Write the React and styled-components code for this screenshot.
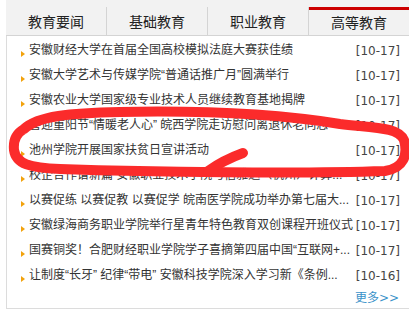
import React from "react";
import styled, { createGlobalStyle } from "styled-components";

const Global = createGlobalStyle`
  html, body { margin: 0; padding: 0; background: #fff; }
  body { font-family: "Noto Sans CJK SC", "Microsoft YaHei", sans-serif; }
`;

const Page = styled.div`
  position: relative;
  width: 409px;
  height: 314px;
  padding-left: 6px;
  box-sizing: border-box;
  overflow: hidden;
`;

const TabBar = styled.div`
  display: flex;
  height: 36px;
  padding-top: 7px;
  box-sizing: border-box;
  background: #f2f2f2;
  border-bottom: 1px solid #d4d4d4;
`;

const Tab = styled.div`
  flex: ${(p) => (p.$last ? "1" : "0 0 101px")};
  height: 29px;
  line-height: 28px;
  text-align: center;
  font-size: 14px;
  color: #222;
  border-right: ${(p) => (p.$last ? "none" : "1px solid #d4d4d4")};
  box-shadow: ${(p) => (p.$active ? "inset 0 3px 0 #cc0000" : "none")};
  padding-top: ${(p) => (p.$active ? "1px" : "0")};
  box-sizing: border-box;
`;

const Panel = styled.div`
  border-left: 1px solid #dcdcdc;
  border-bottom: 1px solid #dcdcdc;
  padding: 2px 0 0 0;
`;

const List = styled.ul`
  list-style: none;
  margin: 0;
  padding: 0;
`;

const Row = styled.li`
  display: flex;
  align-items: center;
  height: 25px;
  padding: 0 9px 0 14px;
  font-size: 12px;
  color: #333;
`;

const Bullet = styled.span`
  flex: none;
  width: 0;
  height: 0;
  border-left: 4px solid #f2a20c;
  border-top: 3px solid transparent;
  border-bottom: 3px solid transparent;
  margin-right: 4px;
  transform: translateY(3px);
`;

const Title = styled.span`
  flex: 1;
  min-width: 0;
  white-space: nowrap;
  overflow: hidden;
  line-height: 25px;
  font-family: "Liberation Sans", "Noto Sans CJK SC", sans-serif;
`;

const Date = styled.span`
  flex: none;
  margin-left: 2px;
  font-family: "DejaVu Sans", "Noto Sans CJK SC", sans-serif;
  font-size: 12px;
  color: #444;
`;

const More = styled.div`
  height: 20px;
  line-height: 20px;
  text-align: right;
  padding-right: 10px;
  font-family: "DejaVu Sans", "Noto Sans CJK SC", sans-serif;
  font-size: 12px;
  color: #3b93c9;
`;

const Scribble = styled.svg`
  position: absolute;
  left: 0;
  top: 0;
  pointer-events: none;
`;

const items = [
  ["安徽财经大学在首届全国高校模拟法庭大赛获佳绩", "[10-17]"],
  ["安徽大学艺术与传媒学院“普通话推广月”圆满举行", "[10-17]"],
  ["安徽农业大学国家级专业技术人员继续教育基地揭牌", "[10-17]"],
  ["喜迎重阳节“情暖老人心” 皖西学院走访慰问离退休老同志", "[10-17]"],
  ["池州学院开展国家扶贫日宣讲活动", "[10-17]"],
  ["校企合作谱新篇 安徽职业技术学院与信雅达（杭州）计算...", "[10-17]"],
  ["以赛促练 以赛促教 以赛促学 皖南医学院成功举办第七届大...", "[10-17]"],
  ["安徽绿海商务职业学院举行星青年特色教育双创课程开班仪式", "[10-17]"],
  ["国赛铜奖！合肥财经职业学院学子喜摘第四届中国“互联网+...", "[10-17]"],
  ["让制度“长牙” 纪律“带电” 安徽科技学院深入学习新《条例...", "[10-16]"],
];

const tabs = ["教育要闻", "基础教育", "职业教育", "高等教育"];

export default function App() {
  return (
    <>
      <Global />
      <Page>
        <TabBar>
          {tabs.map((t, i) => (
            <Tab key={t} $active={i === 3} $last={i === 3}>
              {t}
            </Tab>
          ))}
        </TabBar>
        <Panel>
          <List>
            {items.map(([t, d]) => (
              <Row key={t}>
                <Bullet />
                <Title>{t}</Title>
                <Date>{d}</Date>
              </Row>
            ))}
          </List>
          <More>更多&gt;&gt;</More>
        </Panel>
        <Scribble width="409" height="314" viewBox="0 0 409 314">
          <g fill="none" stroke="#fb2b2b" strokeWidth="10" strokeLinecap="round" strokeLinejoin="round">
            <path d="M 24 129 C 38 116, 70 113, 120 112 C 220 110, 290 116, 340 124 C 375 128, 398 127, 404 140 C 408 155, 404 168, 385 171 C 300 174, 150 172, 60 169 C 30 168, 16 164, 14 150 C 13 140, 17 133, 24 129" />
            <path d="M 243 153 C 232 157, 218 164, 208 171" />
          </g>
        </Scribble>
      </Page>
    </>
  );
}
